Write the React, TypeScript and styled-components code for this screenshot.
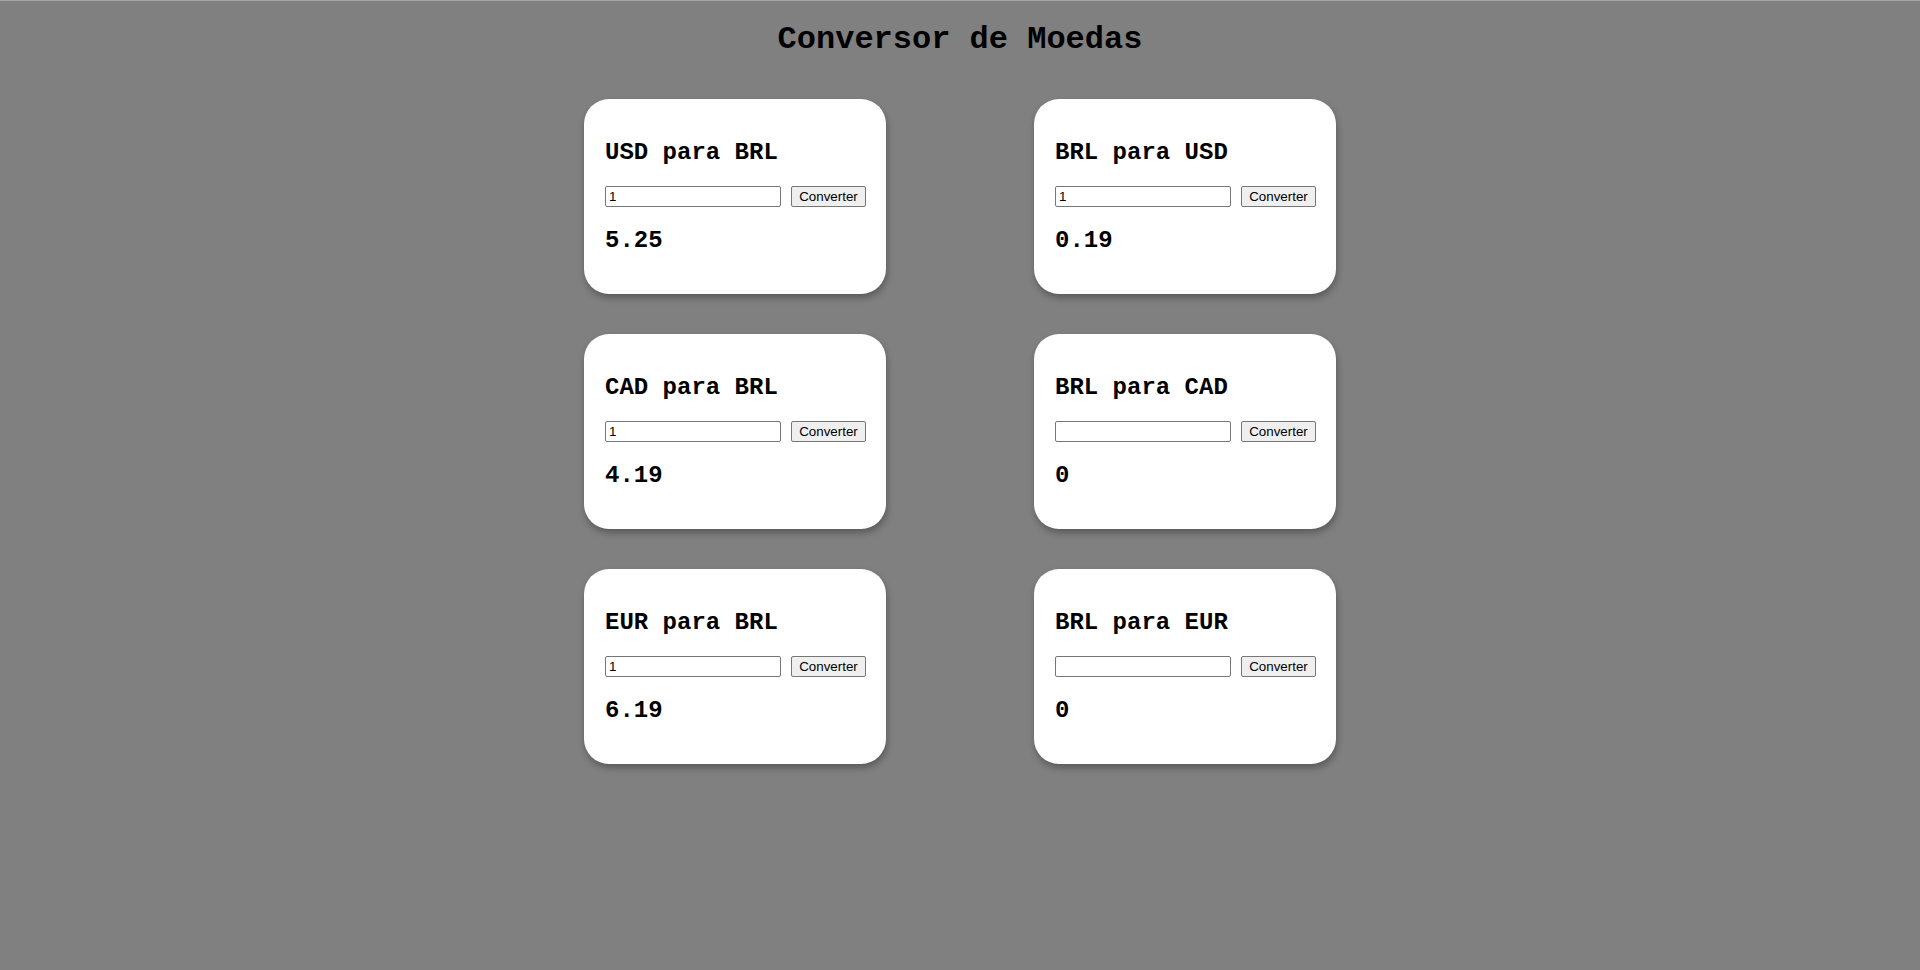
import React, { useState } from "react";
import styled, { createGlobalStyle } from "styled-components";

const mono = `"Courier New", Courier, "Nimbus Mono PS", "FreeMono", "Liberation Mono", monospace`;

const GlobalStyle = createGlobalStyle`
  html, body {
    margin: 0;
    padding: 0;
    background: #808080;
  }
  body {
    border-top: 1px solid #a6a6a6;
    min-height: 969px;
    font-family: ${mono};
  }
`;

const Page = styled.div`
  display: flex;
  flex-direction: column;
  align-items: center;
`;

const Title = styled.h1`
  font-family: ${mono};
  font-size: 32px;
  font-weight: bold;
  color: #000;
  margin: 21px 0 41px;
  line-height: 36px;
`;

const Grid = styled.div`
  display: grid;
  grid-template-columns: repeat(2, 302px);
  column-gap: 148px;
  row-gap: 40px;
`;

const Card = styled.div`
  box-sizing: border-box;
  width: 302px;
  height: 195px;
  padding: 20px 20px 20px 21px;
  background: #fff;
  border-radius: 25px;
  box-shadow: 1px 4px 7px rgba(0, 0, 0, 0.3);
`;

const CardTitle = styled.h2`
  font-family: ${mono};
  font-size: 24px;
  font-weight: bold;
  line-height: 27px;
  color: #000;
  margin: 20px 0;
`;

const Row = styled.div`
  display: flex;
  align-items: center;
  gap: 10px;
  height: 21px;
`;

const Input = styled.input`
  box-sizing: border-box;
  width: 176px;
  height: 21px;
  padding: 1px 3px;
  border: 1px solid #767676;
  border-radius: 2px;
  font-family: "Liberation Sans", Arial, sans-serif;
  font-size: 13.33px;
  color: #000;
  background: #fff;
  outline: none;
`;

const Button = styled.button`
  box-sizing: border-box;
  width: 75px;
  height: 21px;
  padding: 1px 6px;
  border: 1px solid #767676;
  border-radius: 2px;
  background: #efefef;
  font-family: "Liberation Sans", Arial, sans-serif;
  font-size: 13.33px;
  color: #000;
  cursor: pointer;
`;

const Result = styled(CardTitle)``;

type Pair = { from: string; to: string; rate: number; initial: string };

const pairs: Pair[] = [
  { from: "USD", to: "BRL", rate: 5.25, initial: "1" },
  { from: "BRL", to: "USD", rate: 0.19, initial: "1" },
  { from: "CAD", to: "BRL", rate: 4.19, initial: "1" },
  { from: "BRL", to: "CAD", rate: 0.24, initial: "" },
  { from: "EUR", to: "BRL", rate: 6.19, initial: "1" },
  { from: "BRL", to: "EUR", rate: 0.16, initial: "" },
];

const Converter = ({ pair }: { pair: Pair }) => {
  const [value, setValue] = useState(pair.initial);
  const [result, setResult] = useState<string>(
    pair.initial ? (Number(pair.initial) * pair.rate).toFixed(2) : "0"
  );

  return (
    <Card>
      <CardTitle>{`${pair.from} para ${pair.to}`}</CardTitle>
      <Row>
        <Input
          type="text"
          value={value}
          onChange={(e) => setValue(e.target.value)}
        />
        <Button
          onClick={() =>
            setResult(value ? (Number(value) * pair.rate).toFixed(2) : "0")
          }
        >
          Converter
        </Button>
      </Row>
      <Result>{result}</Result>
    </Card>
  );
};

export default function App() {
  return (
    <>
      <GlobalStyle />
      <Page>
        <Title>Conversor de Moedas</Title>
        <Grid>
          {pairs.map((p) => (
            <Converter key={p.from + p.to} pair={p} />
          ))}
        </Grid>
      </Page>
    </>
  );
}
